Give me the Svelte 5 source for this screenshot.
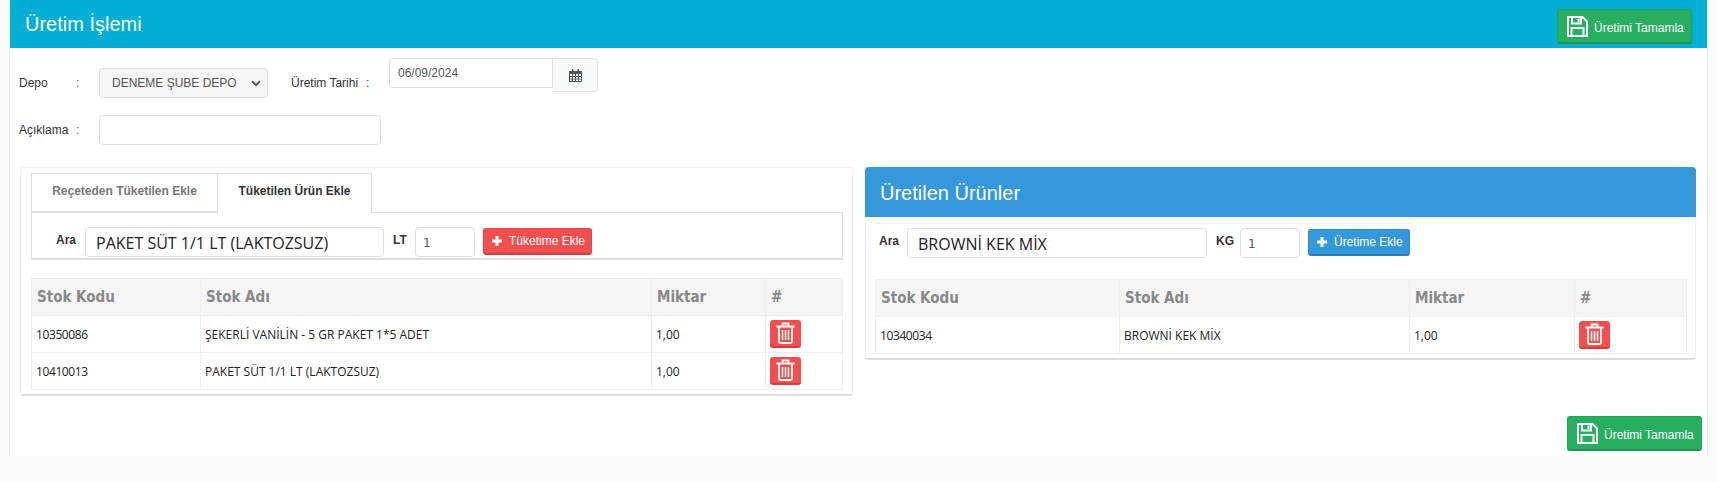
<script>
  const consumed = [
    { code: '10350086', name: 'ŞEKERLİ VANİLİN - 5 GR PAKET 1*5 ADET', qty: '1,00' },
    { code: '10410013', name: 'PAKET SÜT 1/1 LT (LAKTOZSUZ)', qty: '1,00' }
  ];
  const produced = [{ code: '10340034', name: 'BROWNİ KEK MİX', qty: '1,00' }];
</script>

{#snippet saveIcon()}
  <svg class="save-icon" viewBox="0 0 21 21" aria-hidden="true">
    <path d="M1 1h14.500L20 5.500V20H1z" fill="none" stroke="currentColor" stroke-width="2" />
    <path d="M5 1.500v6h9v-6" fill="none" stroke="currentColor" stroke-width="2" />
    <rect x="10.500" y="2.500" width="2" height="3.500" fill="currentColor" />
    <path d="M4.500 20v-8h12v8" fill="none" stroke="currentColor" stroke-width="2" />
  </svg>
{/snippet}

{#snippet plusIcon()}
  <svg class="plus-icon" viewBox="0 0 10 10" aria-hidden="true">
    <path d="M3.500 0h3v3.500H10v3H6.500V10h-3V6.500H0v-3h3.500z" fill="currentColor" />
  </svg>
{/snippet}

{#snippet stockTable(rows, cols)}
  <table class="stock-table">
    <colgroup>
      {#each cols as w}
        <col style="width: {w}px" />
      {/each}
    </colgroup>
    <thead>
      <tr>
        <th>Stok Kodu</th>
        <th>Stok Adı</th>
        <th>Miktar</th>
        <th>#</th>
      </tr>
    </thead>
    <tbody>
      {#each rows as row}
        <tr>
          <td class="code-cell">{row.code}</td>
          <td>{row.name}</td>
          <td>{row.qty}</td>
          <td class="action-cell">
            <button type="button" class="trash-btn" aria-label="Sil">
              <svg viewBox="0 0 19 22" aria-hidden="true">
                <path d="M0.500 4.500h18M6.500 4V1.500h6V4" fill="none" stroke="currentColor" stroke-width="1.800" />
                <path d="M3 5v14.500q0 1.500 1.500 1.500h10q1.500 0 1.500-1.500V5" fill="none" stroke="currentColor" stroke-width="1.800" />
                <path d="M6.500 8v10M9.500 8v10M12.500 8v10" fill="none" stroke="currentColor" stroke-width="1.500" />
              </svg>
            </button>
          </td>
        </tr>
      {/each}
    </tbody>
  </table>
{/snippet}

<div class="card">
  <header class="card-header">
    <h1>Üretim İşlemi</h1>
    <button type="button" class="btn-complete">
      {@render saveIcon()}
      <span>Üretimi Tamamla</span>
    </button>
  </header>

  <div class="card-body">
    <div class="form-row first">
      <label class="field-label" for="depo">Depo</label>
      <span class="colon">:</span>
      <div class="select-wrap">
        <select id="depo" disabled>
          <option>DENEME ŞUBE DEPO</option>
        </select>
        <svg class="chevron" viewBox="0 0 10 7" aria-hidden="true">
          <path d="M1 1.200l4 4 4-4" fill="none" stroke="currentColor" stroke-width="2" />
        </svg>
      </div>
      <label class="date-label" for="tarih">Üretim Tarihi</label>
      <span class="date-colon">:</span>
      <div class="date-group">
        <input id="tarih" class="text-input date-input" value="06/09/2024" />
        <span class="date-addon">
          <svg viewBox="0 0 13 13" aria-hidden="true">
            <path d="M3 0h1.500v2H8.500V0H10v2h3v11H0V2h3z M1 5v2h2V5z M4 5v2h2V5z M7 5v2h2V5z M10 5v2h2V5z M1 8v1.700h2V8z M4 8v1.700h2V8z M7 8v1.700h2V8z M10 8v1.700h2V8z M1 10.500V12h2v-1.500z M4 10.500V12h2v-1.500z M7 10.500V12h2v-1.500z M10 10.500V12h2v-1.500z" fill="currentColor" fill-rule="evenodd" />
          </svg>
        </span>
      </div>
    </div>

    <div class="form-row second">
      <label class="field-label" for="aciklama">Açıklama</label>
      <span class="colon">:</span>
      <input id="aciklama" class="text-input note-input" />
    </div>

    <div class="panels">
      <section class="panel panel-left">
        <div class="tabs">
          <button type="button" class="tab first-tab">Reçeteden Tüketilen Ekle</button>
          <button type="button" class="tab active">Tüketilen Ürün Ekle</button>
        </div>
        <div class="tab-pane">
          <span class="ara-label">Ara</span>
          <input class="text-input search-input" value="PAKET SÜT 1/1 LT (LAKTOZSUZ)" />
          <span class="unit-label">LT</span>
          <input class="text-input qty-input" value="1" />
          <button type="button" class="btn-add red">
            {@render plusIcon()}
            <span>Tüketime Ekle</span>
          </button>
        </div>
        {@render stockTable(consumed, [169, 451, 114, 77])}
      </section>

      <section class="panel panel-right">
        <h2>Üretilen Ürünler</h2>
        <div class="panel-content">
          <div class="search-row">
            <span class="ara-label">Ara</span>
            <input class="text-input search-input" value="BROWNİ KEK MİX" />
            <span class="unit-label kg">KG</span>
            <input class="text-input qty-input" value="1" />
            <button type="button" class="btn-add blue">
              {@render plusIcon()}
              <span>Üretime Ekle</span>
            </button>
          </div>
          {@render stockTable(produced, [244, 290, 165, 112])}
        </div>
      </section>
    </div>

    <div class="footer">
      <button type="button" class="btn-complete">
        {@render saveIcon()}
        <span>Üretimi Tamamla</span>
      </button>
    </div>
  </div>
</div>

<style>
  :global(body) {
    background: #fafafa;
    font-family: "Liberation Sans", Arial, sans-serif;
    font-size: 12px;
    color: #333;
  }

  .card {
    box-sizing: border-box;
    width: 1697px;
    height: 456px;
    margin-left: 10px;
    background: #fff;
    box-shadow: 1px 0 0 #eee, -1px 0 0 #eee, 0 2px 0 #ddd;
  }

  .card-header {
    display: flex;
    align-items: flex-start;
    justify-content: space-between;
    box-sizing: border-box;
    height: 48px;
    padding: 9px 15px 0 15px;
    background: #00afd3;
  }

  h1 {
    margin: 3px 0 0;
    font-size: 20px;
    font-weight: 400;
    line-height: 24px;
    color: #fff;
  }

  .btn-complete {
    display: flex;
    align-items: center;
    gap: 6px;
    box-sizing: border-box;
    width: 135px;
    height: 35px;
    padding: 0 0 0 9px;
    border: 1px solid #24a259;
    border-bottom: 2px solid #1f9650;
    border-radius: 3px;
    background: #27ae60;
    color: #fff;
    font: 12px "Liberation Sans", Arial, sans-serif;
  }

  .btn-complete span {
    margin-top: 3px;
    white-space: nowrap;
  }

  .save-icon {
    width: 21px;
    height: 21px;
    flex: none;
  }

  .card-body {
    padding: 0 5px 0 10px;
  }

  .form-row {
    display: flex;
    align-items: flex-start;
  }

  .form-row.first {
    box-sizing: border-box;
    height: 50px;
    padding-top: 10px;
  }

  .form-row.second {
    margin-top: 17px;
  }

  .field-label {
    width: 57px;
    margin-left: -1px;
    line-height: 30px;
    color: #333;
  }

  .colon {
    width: 23px;
    line-height: 30px;
    color: #555;
  }

  .form-row.first .field-label,
  .form-row.first .colon {
    margin-top: 10px;
  }

  .select-wrap {
    position: relative;
    width: 169px;
    height: 30px;
    margin-top: 10px;
  }

  select {
    box-sizing: border-box;
    width: 100%;
    height: 30px;
    padding: 0 0 0 12px;
    border: 1px solid #ddd;
    border-radius: 4px;
    background: #f5f5f5;
    color: #555;
    font: 12px "Liberation Sans", Arial, sans-serif;
    opacity: 1;
    appearance: none;
  }

  .chevron {
    position: absolute;
    top: 12px;
    right: 7px;
    width: 10px;
    height: 7px;
    color: #555;
  }

  .date-label {
    margin: 10px 0 0 23px;
    width: 75px;
    line-height: 30px;
  }

  .date-colon {
    margin-top: 10px;
    width: 23px;
    line-height: 30px;
  }

  .date-group {
    display: flex;
    align-items: flex-start;
  }

  .text-input {
    box-sizing: border-box;
    height: 30px;
    border: 1px solid #ddd;
    border-radius: 4px;
    background: #fff;
    color: #555;
    font: 12px "Liberation Sans", Arial, sans-serif;
    outline: none;
  }

  .date-input {
    width: 164px;
    padding: 0 8px 1px;
    border-radius: 4px 0 0 4px;
  }

  .date-addon {
    display: flex;
    align-items: center;
    justify-content: center;
    box-sizing: border-box;
    width: 45px;
    height: 34px;
    border: 1px solid #e3e3e3;
    border-left: 0;
    border-radius: 0 4px 4px 0;
    background: #f8f9fa;
    color: #555;
  }

  .date-addon svg {
    width: 13px;
    height: 13px;
  }

  .note-input {
    width: 282px;
  }

  .panels {
    display: flex;
    align-items: flex-start;
    gap: 12px;
    margin-top: 22px;
  }

  .panel {
    box-sizing: border-box;
    border: 1px solid #eee;
    border-bottom: 2px solid #ddd;
    border-radius: 4px;
    background: #fff;
  }

  .panel-left {
    width: 833px;
    height: 229px;
    padding: 5px 9px 0 10px;
  }

  .panel-right {
    width: 831px;
    height: 193px;
    border-top: 0;
  }

  h2 {
    box-sizing: border-box;
    height: 50px;
    margin: 0 -1px;
    padding: 14px 15px 0;
    border-radius: 4px 4px 0 0;
    background: #3498db;
    color: #fff;
    font-size: 20px;
    font-weight: 400;
    line-height: 24px;
  }

  .panel-content {
    padding: 6px 9px 0 9px;
  }

  .tabs {
    display: flex;
    height: 39px;
  }

  .tab {
    box-sizing: border-box;
    height: 39px;
    padding: 0 0 4px;
    border: 1px solid #ddd;
    background: #fff;
    font: bold 12px "Liberation Sans", Arial, sans-serif;
  }

  .first-tab {
    width: 187px;
    color: #777;
  }

  .tab.active {
    width: 154px;
    height: 40px;
    padding-bottom: 5px;
    border-left: 0;
    border-bottom: 0;
    color: #333;
    position: relative;
    z-index: 1;
  }

  .tab-pane {
    display: flex;
    align-items: flex-start;
    box-sizing: border-box;
    height: 48px;
    padding: 14px 0 0 24px;
    border: 1px solid #ddd;
    border-bottom-width: 2px;
  }

  .ara-label {
    width: 29px;
    font-weight: 700;
    line-height: 26px;
    color: #333;
  }

  .search-input {
    width: 299px;
    padding: 2px 10px 0;
    color: #222;
    font: 16px "Open Sans", sans-serif;
  }

  .unit-label {
    width: 31px;
    padding-left: 9px;
    box-sizing: border-box;
    font-weight: 700;
    line-height: 26px;
    color: #333;
  }

  .unit-label.kg {
    width: 33px;
  }

  .qty-input {
    width: 60px;
    padding: 2px 7px 0;
    font-family: "DejaVu Sans", sans-serif;
  }

  .btn-add {
    display: flex;
    align-items: center;
    gap: 7px;
    box-sizing: border-box;
    height: 27px;
    margin: 1px 0 0 8px;
    padding: 0 0 0 8px;
    border: 1px solid transparent;
    border-bottom-width: 2px;
    border-radius: 3px;
    color: #fff;
    font: 12px "Liberation Sans", Arial, sans-serif;
    white-space: nowrap;
  }

  .btn-add.red {
    width: 109px;
    background: #f44f4f;
    border-color: #e64545 #e64545 #d73c3c;
  }

  .btn-add.blue {
    width: 102px;
    background: #3498db;
    border-color: #2f8bc9 #2f8bc9 #2a7fb8;
  }

  .plus-icon {
    width: 10px;
    height: 10px;
    flex: none;
  }

  .search-row {
    display: flex;
    align-items: flex-start;
    box-sizing: border-box;
    width: 538px;
    height: 56px;
    padding: 4px 0 0 4px;
    border-top: 1px solid #f0f0f0;
  }

  .search-row .ara-label {
    width: 28px;
  }

  .search-row .search-input {
    width: 300px;
  }

  .stock-table {
    box-sizing: border-box;
    width: 811px;
    margin-top: 18px;
    border-collapse: collapse;
    table-layout: fixed;
    font-family: "Open Sans", sans-serif;
    font-size: 12px;
    color: #222;
  }

  .panel-right .stock-table {
    margin-top: 0;
  }

  th,
  td {
    height: 36px;
    padding: 0 4px;
    border: 1px solid #eee;
    text-align: left;
  }

  th {
    padding: 0 5px;
    background: #f5f5f5;
    color: #888;
    font-family: "DejaVu Sans Condensed", "DejaVu Sans", sans-serif;
    font-size: 15px;
    font-weight: 700;
  }

  .code-cell {
    letter-spacing: -0.4px;
  }

  td.action-cell {
    padding: 0 0 0 4px;
  }

  .trash-btn {
    display: flex;
    align-items: center;
    justify-content: center;
    box-sizing: border-box;
    width: 31px;
    height: 28px;
    padding: 0;
    border: 0;
    border-bottom: 2px solid #d73c3c;
    border-radius: 3px;
    background: #f44f4f;
    color: #fff;
  }

  .trash-btn svg {
    width: 19px;
    height: 22px;
  }

  .footer {
    display: flex;
    justify-content: flex-end;
    margin-top: 20px;
  }
</style>
